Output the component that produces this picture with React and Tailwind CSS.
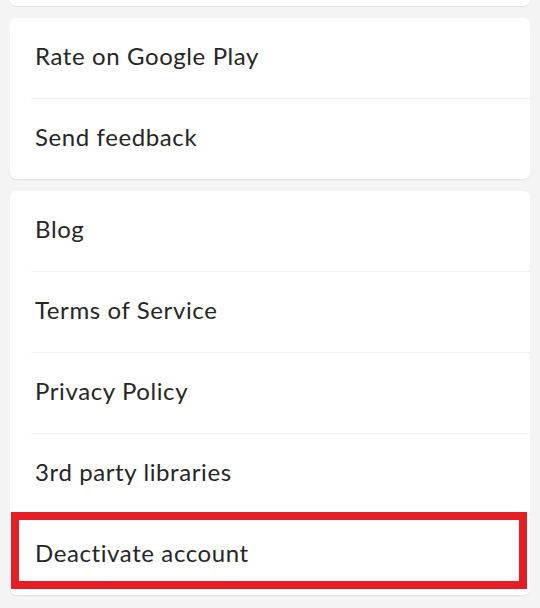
export default function App() {
  const groups = [
    ["Rate on Google Play", "Send feedback"],
    ["Blog", "Terms of Service", "Privacy Policy", "3rd party libraries", "Deactivate account"],
  ];

  return (
    <div
      className="min-h-[608px] w-[540px] bg-[#f4f4f4] px-[10px] flex flex-col gap-[12px] overflow-hidden"
      style={{ fontFamily: "Lato, 'Noto Sans', sans-serif" }}
    >
      {/* tail of the card above */}
      <div className="h-[6px] rounded-b-[6px] bg-white shadow-[0_1px_1px_rgba(0,0,0,0.08)]" />

      {groups.map((items, gi) => (
        <div
          key={gi}
          className="rounded-[6px] bg-white shadow-[0_1px_1px_rgba(0,0,0,0.08)]"
        >
          {items.map((label, i) => (
            <div key={label} className="relative">
              {i > 0 && <div className="ml-[21px] h-px bg-[#f2f2f2]" />}
              <div className="flex h-[80px] items-center pl-[25px] pb-[4px] text-[24px] tracking-[0.6px] text-[#262626]">
                {label}
              </div>
              {label === "Deactivate account" && (
                <div className="pointer-events-none absolute left-[1px] right-[3px] top-[-2px] bottom-[6px] border-[8px] border-[#e31e24]" />
              )}
            </div>
          ))}
        </div>
      ))}
    </div>
  );
}
